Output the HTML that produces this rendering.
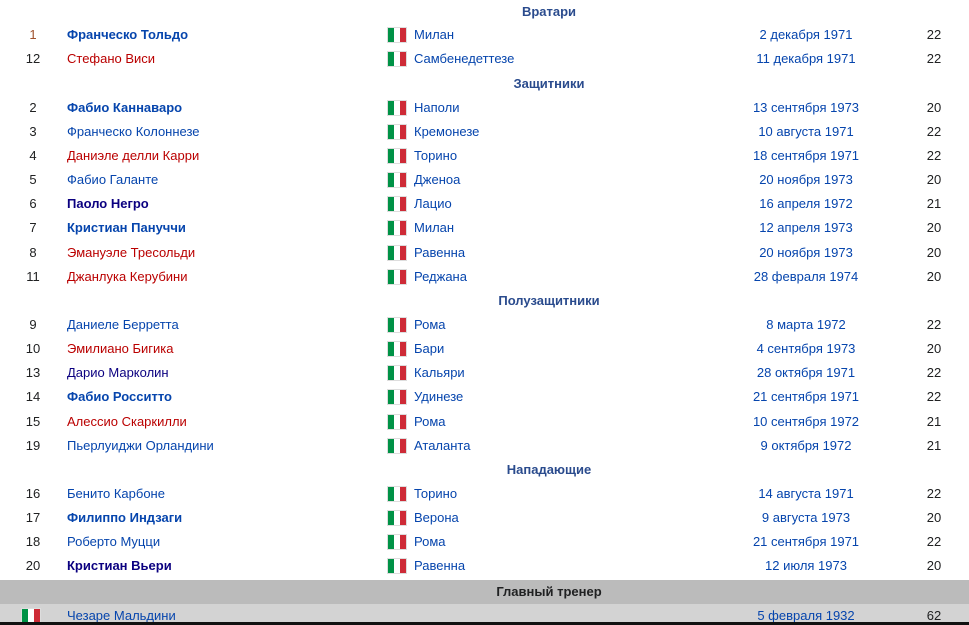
<!DOCTYPE html><html><head><meta charset="utf-8"><style>
body{margin:0;width:969px;height:625px;overflow:hidden;background:#fff;font-family:"Liberation Sans",Arial,sans-serif;font-size:13px;position:relative}
.r{position:absolute;left:0;width:969px;height:24px;line-height:24px}
.n{position:absolute;left:13px;width:40px;text-align:center;color:#202122}
.p{position:absolute;left:67px;color:#0645ad}
.b{font-weight:bold}.red{color:#ba0000}.v{color:#0b0080}
.f{position:absolute;left:388px;top:5px;width:18px;height:14px;background:linear-gradient(90deg,#009246 0 6px,#fff 6px 12px,#ce2b37 12px);box-shadow:0 0 0 1px #ddd}
.c{position:absolute;left:414px;color:#0645ad}
.d{position:absolute;left:706px;width:200px;text-align:center;color:#0645ad}
.a{position:absolute;left:914px;width:40px;text-align:center;color:#202122}
.h{position:absolute;left:0;width:1098px;text-align:center;font-weight:bold;color:#2a4b8d;height:24px;line-height:24px}
</style></head><body>
<div class="h" style="top:0">Вратари</div>
<div class="r" style="top:23px"><span class="n" style="color:#a0522d">1</span><span class="p b">Франческо Тольдо</span><span class="f"></span><span class="c">Милан</span><span class="d">2 декабря 1971</span><span class="a">22</span></div>
<div class="r" style="top:47px"><span class="n">12</span><span class="p red">Стефано Виси</span><span class="f"></span><span class="c">Самбенедеттезе</span><span class="d">11 декабря 1971</span><span class="a">22</span></div>
<div class="h" style="top:72px">Защитники</div>
<div class="r" style="top:96px"><span class="n">2</span><span class="p b">Фабио Каннаваро</span><span class="f"></span><span class="c">Наполи</span><span class="d">13 сентября 1973</span><span class="a">20</span></div>
<div class="r" style="top:120px"><span class="n">3</span><span class="p">Франческо Колоннезе</span><span class="f"></span><span class="c">Кремонезе</span><span class="d">10 августа 1971</span><span class="a">22</span></div>
<div class="r" style="top:144px"><span class="n">4</span><span class="p red">Даниэле делли Карри</span><span class="f"></span><span class="c">Торино</span><span class="d">18 сентября 1971</span><span class="a">22</span></div>
<div class="r" style="top:168px"><span class="n">5</span><span class="p">Фабио Галанте</span><span class="f"></span><span class="c">Дженоа</span><span class="d">20 ноября 1973</span><span class="a">20</span></div>
<div class="r" style="top:192px"><span class="n">6</span><span class="p b v">Паоло Негро</span><span class="f"></span><span class="c">Лацио</span><span class="d">16 апреля 1972</span><span class="a">21</span></div>
<div class="r" style="top:216px"><span class="n">7</span><span class="p b">Кристиан Пануччи</span><span class="f"></span><span class="c">Милан</span><span class="d">12 апреля 1973</span><span class="a">20</span></div>
<div class="r" style="top:241px"><span class="n">8</span><span class="p red">Эмануэле Тресольди</span><span class="f"></span><span class="c">Равенна</span><span class="d">20 ноября 1973</span><span class="a">20</span></div>
<div class="r" style="top:265px"><span class="n">11</span><span class="p red">Джанлука Керубини</span><span class="f"></span><span class="c">Реджана</span><span class="d">28 февраля 1974</span><span class="a">20</span></div>
<div class="h" style="top:289px">Полузащитники</div>
<div class="r" style="top:313px"><span class="n">9</span><span class="p">Даниеле Берретта</span><span class="f"></span><span class="c">Рома</span><span class="d">8 марта 1972</span><span class="a">22</span></div>
<div class="r" style="top:337px"><span class="n">10</span><span class="p red">Эмилиано Бигика</span><span class="f"></span><span class="c">Бари</span><span class="d">4 сентября 1973</span><span class="a">20</span></div>
<div class="r" style="top:361px"><span class="n">13</span><span class="p v">Дарио Марколин</span><span class="f"></span><span class="c">Кальяри</span><span class="d">28 октября 1971</span><span class="a">22</span></div>
<div class="r" style="top:385px"><span class="n">14</span><span class="p b">Фабио Росситто</span><span class="f"></span><span class="c">Удинезе</span><span class="d">21 сентября 1971</span><span class="a">22</span></div>
<div class="r" style="top:410px"><span class="n">15</span><span class="p red">Алессио Скаркилли</span><span class="f"></span><span class="c">Рома</span><span class="d">10 сентября 1972</span><span class="a">21</span></div>
<div class="r" style="top:434px"><span class="n">19</span><span class="p">Пьерлуиджи Орландини</span><span class="f"></span><span class="c">Аталанта</span><span class="d">9 октября 1972</span><span class="a">21</span></div>
<div class="h" style="top:458px">Нападающие</div>
<div class="r" style="top:482px"><span class="n">16</span><span class="p">Бенито Карбоне</span><span class="f"></span><span class="c">Торино</span><span class="d">14 августа 1971</span><span class="a">22</span></div>
<div class="r" style="top:506px"><span class="n">17</span><span class="p b">Филиппо Индзаги</span><span class="f"></span><span class="c">Верона</span><span class="d">9 августа 1973</span><span class="a">20</span></div>
<div class="r" style="top:530px"><span class="n">18</span><span class="p">Роберто Муцци</span><span class="f"></span><span class="c">Рома</span><span class="d">21 сентября 1971</span><span class="a">22</span></div>
<div class="r" style="top:554px"><span class="n">20</span><span class="p b v">Кристиан Вьери</span><span class="f"></span><span class="c">Равенна</span><span class="d">12 июля 1973</span><span class="a">20</span></div>
<div style="position:absolute;top:580px;left:0;width:969px;height:24px;line-height:24px;background:#bbb;text-align:center;font-weight:bold;color:#202122;padding-left:129px;box-sizing:border-box">Главный тренер</div>
<div class="r" style="top:604px;height:18px;line-height:24px;background:#d3d3d3;overflow:hidden"><span class="f" style="left:22px;top:5px"></span><span class="p">Чезаре Мальдини</span><span class="d">5 февраля 1932</span><span class="a">62</span></div>
<div style="position:absolute;top:622px;left:0;width:969px;height:3px;background:#111"></div>
</body></html>
